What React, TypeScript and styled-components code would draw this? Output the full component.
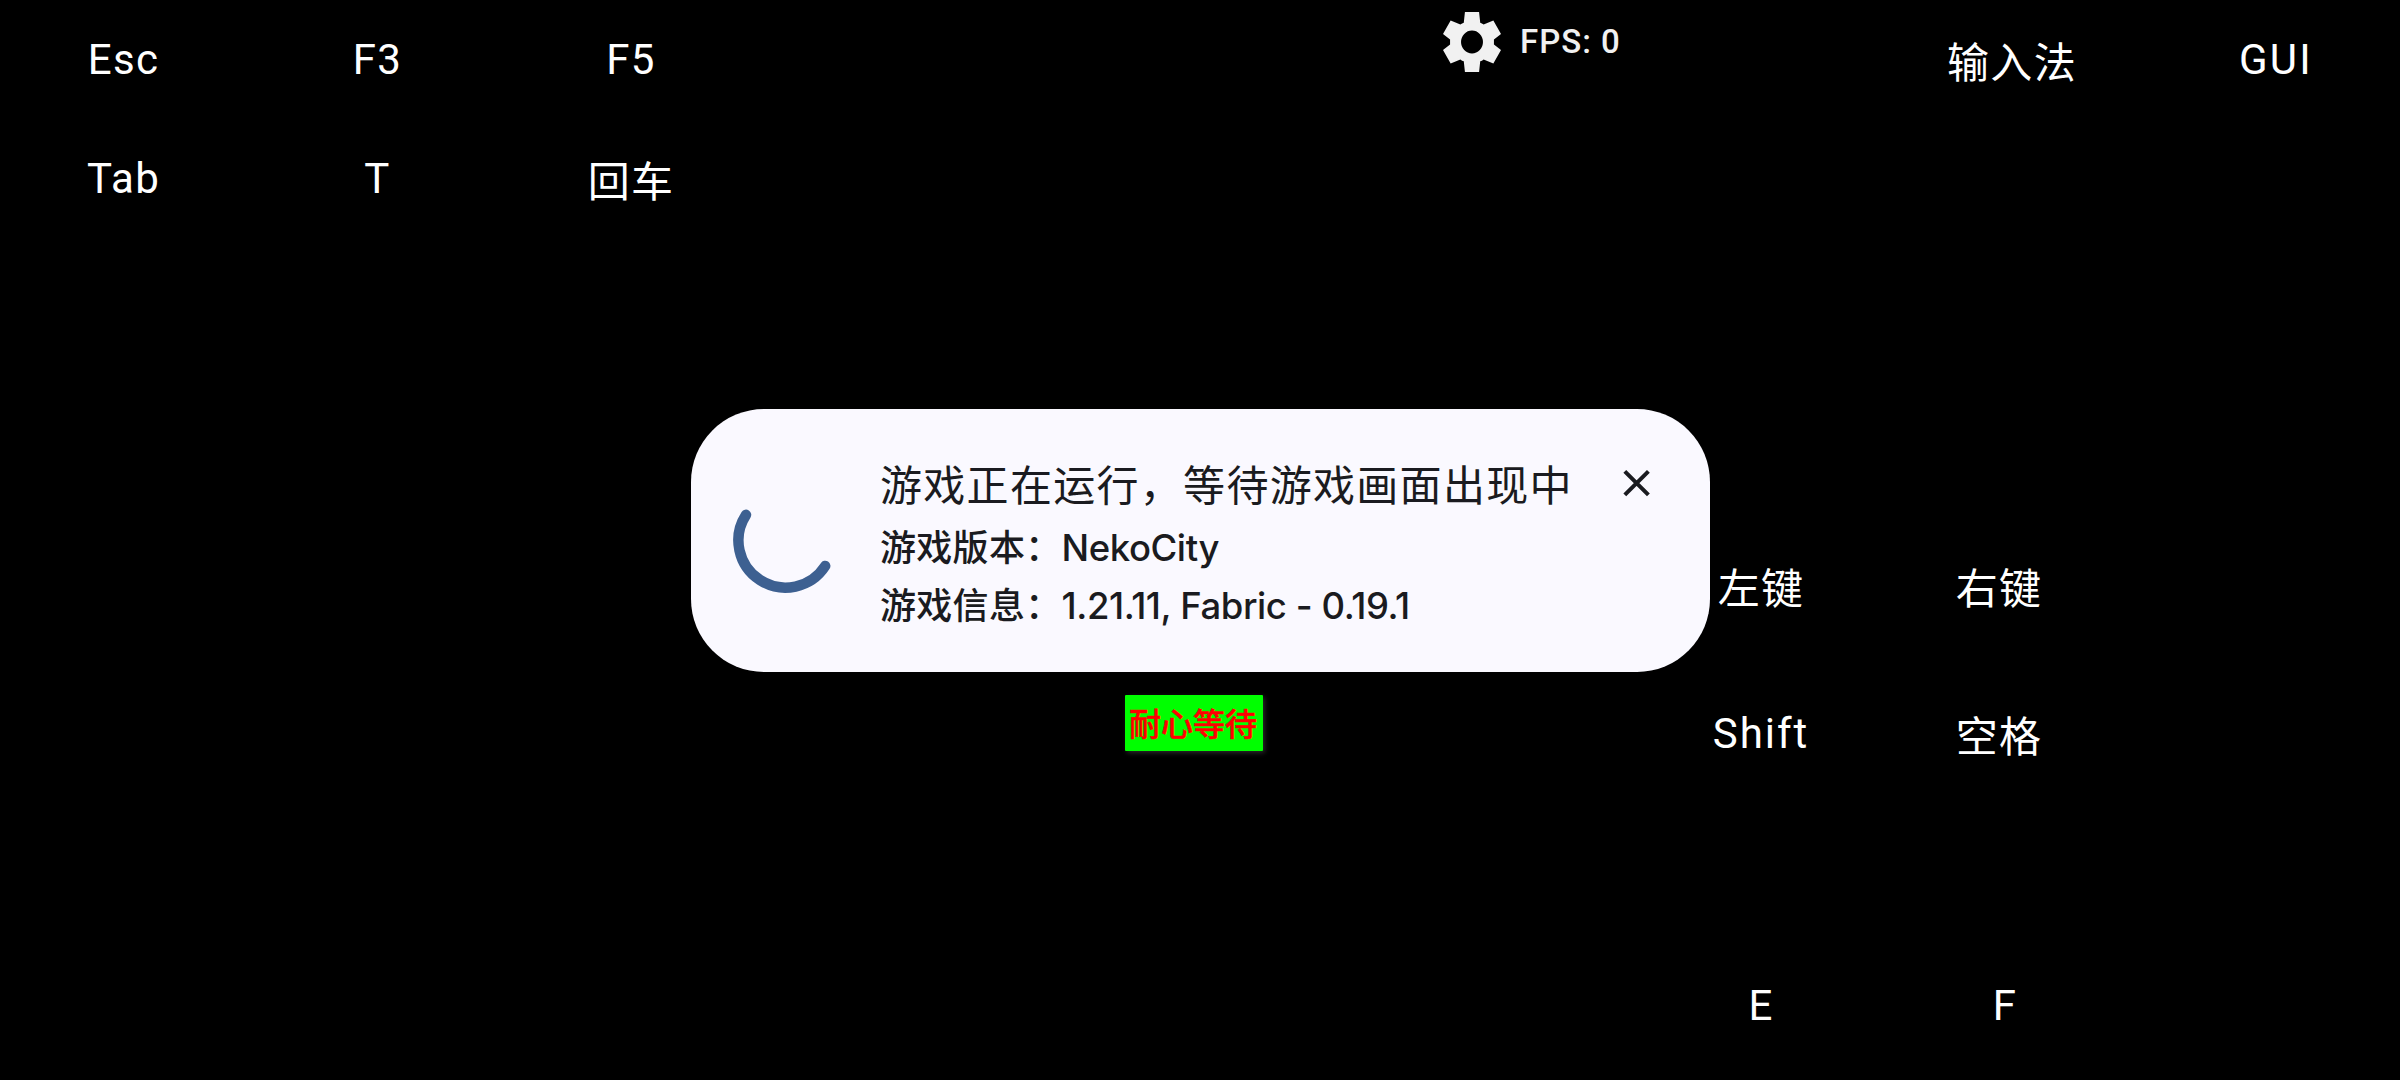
import React from 'react';
import styled, { createGlobalStyle } from 'styled-components';

const GlobalStyle = createGlobalStyle`
  * {
    box-sizing: border-box;
  }
  body {
    margin: 0;
    background: #000;
    overflow: hidden;
  }
`;

const Screen = styled.main`
  position: relative;
  display: flex;
  flex-direction: column;
  width: 2400px;
  height: 1080px;
  background: #000;
  color: #fff;
  font-family: Roboto, 'Noto Sans CJK SC', sans-serif;
  font-size: 42px;
  letter-spacing: 1.3px;
  overflow: hidden;
`;

const TopRow = styled.header`
  display: flex;
  height: 508px;
`;

const KeyGrid = styled.div<{ $columns: string; $rows: string }>`
  display: grid;
  grid-template-columns: ${props => props.$columns};
  grid-template-rows: ${props => props.$rows};
`;

const Key = styled.div<{ $cjk?: boolean; $spacing?: number }>`
  display: flex;
  align-items: center;
  justify-content: center;
  padding-top: ${props => (props.$cjk ? '8px' : '0')};
  line-height: 60px;
  letter-spacing: ${props => props.$spacing ?? 1.3}px;
  white-space: nowrap;
`;

const Status = styled.div`
  display: flex;
  flex: 1;
  align-items: center;
  gap: 19px;
  height: 84px;
  padding-left: 689px;
  color: #f1f1f1;
`;

const Fps = styled.span`
  margin-top: -1px;
  font-size: 33px;
  font-weight: 500;
  line-height: 40px;
  letter-spacing: 1px;
`;

const ActionArea = styled.section`
  display: flex;
  flex: 1;
  flex-direction: column;
  justify-content: space-between;
  padding-left: 1642px;
`;

const Dialog = styled.section`
  position: absolute;
  top: 409px;
  left: 691px;
  display: flex;
  align-items: flex-start;
  width: 1019px;
  height: 263px;
  padding: 47px 42px 0 41px;
  border-radius: 73px;
  background: #faf9ff;
  color: #1a1b20;
`;

const Spinner = styled.svg`
  flex: none;
  width: 106px;
  height: 106px;
  margin: 32px 42px 0 0;
`;

const DialogBody = styled.div`
  flex: 1;
`;

const Title = styled.h1`
  margin: 0 0 1px;
  font-size: 42px;
  font-weight: 400;
  line-height: 62px;
  white-space: nowrap;
`;

const Detail = styled.p`
  height: 58px;
  margin: 0;
  font-size: 36px;
  font-weight: 500;
  line-height: 58px;
  letter-spacing: 0.3px;
  white-space: pre;
`;

const Value = styled.span`
  font-family: Inter, sans-serif;
  font-size: 36.5px;
  letter-spacing: -0.42px;
`;

const CloseButton = styled.button`
  display: flex;
  flex: none;
  margin: 5px 9px 0 0;
  padding: 0;
  border: 0;
  background: none;
  color: inherit;
`;

const Hint = styled.div`
  position: absolute;
  top: 695px;
  left: 1125px;
  display: flex;
  align-items: center;
  justify-content: center;
  width: 138px;
  height: 56px;
  padding: 0 2px 2px 0;
  border-radius: 1px;
  background: #00ff00;
  box-shadow: 2px 2px 5px #2a2a2a;
  color: #ff0000;
  font-size: 32px;
  font-weight: 500;
  letter-spacing: 0;
  -webkit-text-stroke: 0.5px #ff0000;
`;

const GearIcon = () => (
  <svg width="58" height="60" viewBox="78 80 804 800" preserveAspectRatio="none" fill="currentColor">
    <path
      fillRule="evenodd"
      d="M382 880L366 738Q342 730 319 712L184 768L78 588L176 512V448L78 372L184 192L319 248Q342 230 366 222L382 80H578L594 222Q618 230 641 248L776 192L882 372L784 448V512L882 588L776 768L641 712Q618 730 594 738L578 880ZM480 632A152 152 0 1 0 480 328A152 152 0 1 0 480 632Z"
    />
  </svg>
);

const App = () => (
  <Screen>
    <GlobalStyle />
    <TopRow>
      <KeyGrid $columns="247px 261px 246px" $rows="120px 118px">
        <Key>Esc</Key>
        <Key>F3</Key>
        <Key>F5</Key>
        <Key>Tab</Key>
        <Key>T</Key>
        <Key $cjk>回车</Key>
      </KeyGrid>
      <Status>
        <GearIcon />
        <Fps>FPS: 0</Fps>
      </Status>
      <KeyGrid $columns="280px 248px" $rows="120px">
        <Key $cjk>输入法</Key>
        <Key $spacing={2.3}>GUI</Key>
      </KeyGrid>
    </TopRow>
    <ActionArea>
      <KeyGrid $columns="238px 238px" $rows="156px 140px">
        <Key $cjk>左键</Key>
        <Key $cjk>右键</Key>
        <Key $spacing={2}>Shift</Key>
        <Key $cjk>空格</Key>
      </KeyGrid>
      <KeyGrid $columns="238px 250px" $rows="148px">
        <Key>E</Key>
        <Key>F</Key>
      </KeyGrid>
    </ActionArea>
    <Dialog>
      <Spinner viewBox="0 0 106 106" fill="none">
        <path
          d="M14 26.8A47.1 47.1 0 1 0 93.2 78"
          stroke="#3d6091"
          strokeWidth="10.5"
          strokeLinecap="round"
        />
      </Spinner>
      <DialogBody>
        <Title>游戏正在运行，等待游戏画面出现中</Title>
        <Detail>
          游戏版本：<Value>NekoCity</Value>
        </Detail>
        <Detail>
          游戏信息：<Value>1.21.11, Fabric - 0.19.1</Value>
        </Detail>
      </DialogBody>
      <CloseButton aria-label="关闭">
        <svg width="44" height="44" viewBox="0 0 44 44" stroke="currentColor" strokeWidth="4">
          <path d="M9.8 10.3L33.4 33.9M33.4 10.3L9.8 33.9" />
        </svg>
      </CloseButton>
    </Dialog>
    <Hint>耐心等待</Hint>
  </Screen>
);

export default App;
